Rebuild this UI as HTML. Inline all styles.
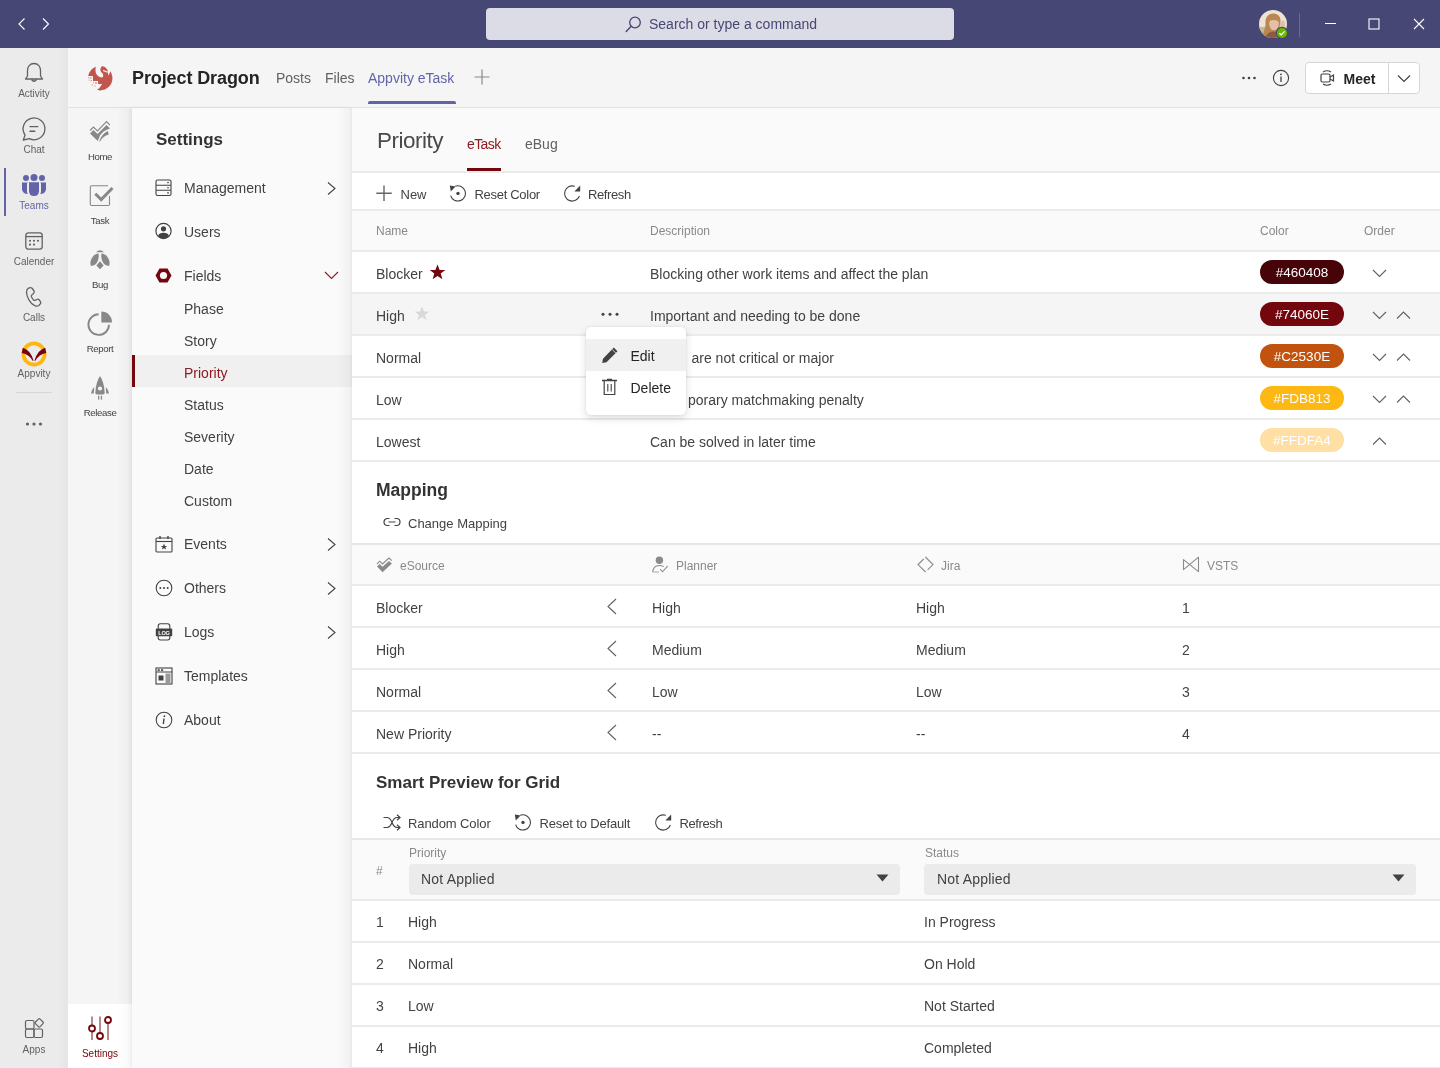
<!DOCTYPE html>
<html><head><meta charset="utf-8">
<style>
*{box-sizing:border-box;margin:0;padding:0}
html,body{width:1440px;height:1068px;overflow:hidden;background:#fff;font-family:"Liberation Sans",sans-serif;color:#242424}
.a{position:absolute}
svg{position:absolute;overflow:visible}
.t{position:absolute;white-space:nowrap;line-height:1}
#root{position:absolute;left:0;top:0;width:1440px;height:1068px;will-change:transform}
</style></head><body><div id="root">

<div class="a" style="left:0px;top:0px;width:1440px;height:48px;background:#464775;"></div>
<svg style="left:18px;top:18px;" width="8" height="12" viewBox="0 0 8 12"><path d="M6.5 0.5 L1 6 L6.5 11.5" fill="none" stroke="#fff" stroke-width="1.1"/></svg>
<svg style="left:42px;top:18px;" width="8" height="12" viewBox="0 0 8 12"><path d="M1 0.5 L6.5 6 L1 11.5" fill="none" stroke="#fff" stroke-width="1.1"/></svg>
<div class="a" style="left:486px;top:8px;width:468px;height:32px;background:#DCDCE6;border-radius:4px;"></div>
<svg style="left:625px;top:16px;" width="17" height="17" viewBox="0 0 17 17"><circle cx="10" cy="6.5" r="5.3" fill="none" stroke="#464775" stroke-width="1.3"/><path d="M6.2 10.3 L1.2 15.5" stroke="#464775" stroke-width="1.4" stroke-linecap="round"/></svg>
<div class="t" style="left:649px;top:17.15px;font-size:14px;color:#464775;">Search or type a command</div>
<svg style="left:1259px;top:10px;" width="28" height="28" viewBox="0 0 28 28"><defs><clipPath id="av"><circle cx="14" cy="14" r="14"/></clipPath></defs>
<g clip-path="url(#av)"><rect width="28" height="28" fill="#ECE3D4"/><rect y="17" width="28" height="11" fill="#C7B69A"/>
<path d="M6.5 10 Q8.5 3 15 3.5 Q21.5 4 21.5 11 L20.5 18 Q18 24 12 28 L2 28 Q5.5 22 6.5 15 Z" fill="#B98752"/>
<ellipse cx="15" cy="14" rx="4.8" ry="6.3" fill="#E3C1A5"/>
<path d="M9.5 11 Q12 5.5 19.5 7.5 Q21.2 9.5 20.6 12.5 Q17 8.5 9.5 11 Z" fill="#B98752"/>
<ellipse cx="23.5" cy="14" rx="2.6" ry="3.6" fill="#DDBFAA"/>
<path d="M6 28 Q9 21 15 21.5 Q20 22 21 28 Z" fill="#8E5B41"/></g></svg>
<svg style="left:1275px;top:26px;" width="14" height="14" viewBox="0 0 14 14"><circle cx="7" cy="7" r="6.2" fill="#464775"/><circle cx="7" cy="7" r="5.1" fill="#6BB700"/><path d="M4.4 7.3 L6.2 8.9 L9.6 5.4" fill="none" stroke="#fff" stroke-width="1.3"/></svg>
<div class="a" style="left:1299px;top:13px;width:1px;height:24px;background:#6A6B95;"></div>
<div class="a" style="left:1325px;top:23px;width:11px;height:1px;background:#fff;"></div>
<svg style="left:1368px;top:18px;" width="12" height="12" viewBox="0 0 12 12"><rect x="1" y="1" width="10" height="10" fill="none" stroke="#fff" stroke-width="1.1"/></svg>
<svg style="left:1413px;top:18px;" width="12" height="12" viewBox="0 0 12 12"><path d="M1 1 L11 11 M11 1 L1 11" stroke="#fff" stroke-width="1.1"/></svg>
<div class="a" style="left:0px;top:48px;width:68px;height:1020px;background:#EBEBEB;"></div>
<div class="a" style="left:57px;top:48px;width:11px;height:1020px;background:linear-gradient(to right, rgba(0,0,0,0), rgba(0,0,0,0.025));"></div>
<svg style="left:24px;top:62px;" width="20" height="22" viewBox="0 0 20 22"><path d="M10 1.5 C5.8 1.5 3.5 4.8 3.5 8.8 L3.5 14 L1.5 17 L18.5 17 L16.5 14 L16.5 8.8 C16.5 4.8 14.2 1.5 10 1.5 Z" fill="none" stroke="#616161" stroke-width="1.3" stroke-linejoin="round"/><path d="M7.5 17.5 Q10 21 12.5 17.5" fill="none" stroke="#616161" stroke-width="1.3"/></svg>
<div class="t" style="left:-26px;width:120px;text-align:center;top:88.53px;font-size:10px;color:#616161;letter-spacing:0px">Activity</div>
<svg style="left:18px;top:112px;" width="32" height="32" viewBox="0 0 32 32"><path d="M7.07 23.05 A10.9 10.9 0 1 1 11.4 26.7 L5.3 28 Z" fill="none" stroke="#616161" stroke-width="1.3" stroke-linejoin="round"/><path d="M12 14.6 H19.8 M12 19.3 H16.8" stroke="#616161" stroke-width="1.4" stroke-linecap="round"/></svg>
<div class="t" style="left:-26px;width:120px;text-align:center;top:144.53px;font-size:10px;color:#616161;letter-spacing:0px">Chat</div>
<div class="a" style="left:4px;top:168px;width:2px;height:48px;background:#6264A7;"></div>
<svg style="left:18px;top:170px;" width="32" height="32" viewBox="0 0 32 32"><g fill="#6264A7"><circle cx="8" cy="8" r="3"/><circle cx="16" cy="7.5" r="3.5"/><circle cx="24" cy="8" r="3"/><path d="M11 12.2 H21 V20.5 Q21 26 16 26 Q11 26 11 20.5 Z"/><path d="M4 12.5 H9.8 Q9 13.2 9 14 V21.5 Q9 23 10 24 Q5 24 4 19.5 Z"/><path d="M28 12.5 H22.2 Q23 13.2 23 14 V21.5 Q23 23 22 24 Q27 24 28 19.5 Z"/></g></svg>
<div class="t" style="left:-26px;width:120px;text-align:center;top:200.53px;font-size:10px;color:#6264A7;letter-spacing:0px">Teams</div>
<svg style="left:25px;top:232px;" width="18" height="18" viewBox="0 0 18 18"><rect x="0.8" y="0.8" width="16.4" height="16.4" rx="2.6" fill="none" stroke="#616161" stroke-width="1.3"/><path d="M0.8 4.6 H17.2" stroke="#616161" stroke-width="1.3"/><g fill="#616161"><circle cx="5" cy="8.8" r="1.05"/><circle cx="9" cy="8.8" r="1.05"/><circle cx="13" cy="8.8" r="1.05"/><circle cx="5" cy="12.6" r="1.05"/><circle cx="9" cy="12.6" r="1.05"/></g></svg>
<div class="t" style="left:-26px;width:120px;text-align:center;top:256.54px;font-size:10px;color:#616161;letter-spacing:0px">Calender</div>
<svg style="left:18px;top:280px;" width="32" height="32" viewBox="0 0 32 32"><path d="M10.5 8.2 Q12.5 7.2 13.8 8 Q15.5 9.8 16.2 11.5 Q16.5 13 15 14 L13.8 15 Q13 15.8 13.5 17 L15.5 20 Q16.2 20.8 17.5 20.2 L18.8 19.5 Q20.2 18.8 21.2 19.8 L22.6 21.8 Q23.2 23.2 22 24.3 L20.8 25.5 Q19.5 26.5 17.5 26 Q13.5 24.5 11 20 Q8.5 15.5 8.5 12 Q8.6 9.2 10.5 8.2 Z" fill="none" stroke="#616161" stroke-width="1.3" stroke-linejoin="round"/></svg>
<div class="t" style="left:-26px;width:120px;text-align:center;top:312.54px;font-size:10px;color:#616161;letter-spacing:0px">Calls</div>
<svg style="left:18px;top:338px;" width="32" height="32" viewBox="0 0 32 32"><circle cx="16" cy="16" r="10.6" fill="none" stroke="#FFB60F" stroke-width="3.8"/><path d="M4.8 9.8 Q12.5 12 15.6 22.8 L14.6 22.8 Q11.5 16.5 3.8 15 Z M27.2 9.8 Q19.5 12 16.4 22.8 L17.4 22.8 Q20.5 16.5 28.2 15 Z" fill="#7A0010"/></svg>
<div class="t" style="left:-26px;width:120px;text-align:center;top:368.54px;font-size:10px;color:#616161;letter-spacing:0px">Appvity</div>
<div class="a" style="left:16px;top:392px;width:36px;height:1px;background:#D6D6D6;"></div>
<svg style="left:25px;top:421px;" width="18" height="6" viewBox="0 0 18 6"><circle cx="2.5" cy="3" r="1.6" fill="#616161"/><circle cx="9" cy="3" r="1.6" fill="#616161"/><circle cx="15.5" cy="3" r="1.6" fill="#616161"/></svg>
<svg style="left:24px;top:1017px;" width="22" height="22" viewBox="0 0 22 22"><rect x="1.5" y="3.5" width="8.5" height="8.5" rx="1.5" fill="none" stroke="#616161" stroke-width="1.2"/><rect x="1.5" y="12" width="8.5" height="8.5" rx="1.5" fill="none" stroke="#616161" stroke-width="1.2"/><rect x="10" y="12" width="8.5" height="8.5" rx="1.5" fill="none" stroke="#616161" stroke-width="1.2"/><rect x="12" y="2.6" width="6.5" height="6.5" rx="1.2" transform="rotate(45 15.25 5.85)" fill="#EBEBEB" stroke="#616161" stroke-width="1.2"/></svg>
<div class="t" style="left:-26px;width:120px;text-align:center;top:1044.54px;font-size:10px;color:#616161;letter-spacing:0px">Apps</div>
<div class="a" style="left:68px;top:48px;width:1372px;height:60px;background:#F5F5F5;"></div>
<div class="a" style="left:68px;top:107px;width:1372px;height:1px;background:#E1E1E1;"></div>
<svg style="left:84px;top:62px;" width="32" height="32" viewBox="0 0 32 32"><circle cx="16.2" cy="16.2" r="12.2" fill="#C4554D"/><path d="M12.8 2.5 C10.3 8 11.2 13.6 16.5 15.3 C19.6 16.1 20.2 12.6 17.6 10.4 C15.8 8.8 15.9 5.8 18.8 3.6 L18 1.5 Z" fill="#F5F5F5"/><path d="M21 2 L30 2 L30 9.2 L26.3 9.2 L24.6 13.8 L23.6 9.6 L23.5 8 L20.5 4 Z" fill="#F5F5F5"/><path d="M19.2 7.8 L23.8 9.8 L23.6 10.8 L19.2 9.2 Z" fill="#F5F5F5"/><path d="M2 14 L9 14 L9 19 L14 19 L14 22 L18.2 22 Q16 26.5 11 29.5 L2 29.5 Z" fill="#F5F5F5"/><g fill="#DDA09A"><rect x="4.2" y="15" width="1.2" height="1.2"/><rect x="6.2" y="15.3" width="1.5" height="1.5"/><rect x="4.5" y="17.5" width="1.1" height="1.1"/><rect x="6.5" y="18" width="1.5" height="1.2"/><rect x="9" y="20" width="1.2" height="1.2"/><rect x="11" y="20.3" width="2" height="1.5"/><rect x="7.5" y="22.5" width="1.5" height="1"/><rect x="10.5" y="23.5" width="1.3" height="1"/></g></svg>
<div class="t" style="left:132px;top:68.76px;font-size:18px;color:#242424;font-weight:700;letter-spacing:-0.1px;">Project Dragon</div>
<div class="t" style="left:276px;top:71.15px;font-size:14px;color:#616161;">Posts</div>
<div class="t" style="left:325px;top:71.15px;font-size:14px;color:#616161;">Files</div>
<div class="t" style="left:368px;top:71.15px;font-size:14px;color:#6264A7;letter-spacing:0px;">Appvity eTask</div>
<div class="a" style="left:368px;top:101px;width:88px;height:3px;background:#6264A7;border-radius:2px 2px 0 0;"></div>
<svg style="left:474px;top:69px;" width="16" height="16" viewBox="0 0 16 16"><path d="M8 0.5 V15.5 M0.5 8 H15.5" stroke="#8A8A8A" stroke-width="1.2"/></svg>
<svg style="left:1242px;top:76px;" width="14" height="4" viewBox="0 0 14 4"><circle cx="1.5" cy="2" r="1.3" fill="#424242"/><circle cx="7" cy="2" r="1.3" fill="#424242"/><circle cx="12.5" cy="2" r="1.3" fill="#424242"/></svg>
<svg style="left:1272px;top:69px;" width="18" height="18" viewBox="0 0 18 18"><circle cx="9" cy="9" r="7.6" fill="none" stroke="#424242" stroke-width="1.1"/><circle cx="9" cy="5.3" r="0.9" fill="#424242"/><path d="M9 7.5 V13" stroke="#424242" stroke-width="1.3"/></svg>
<div class="a" style="left:1305px;top:62px;width:115px;height:32px;background:#fff;border:1px solid #D6D6D6;border-radius:4px;"></div>
<div class="a" style="left:1388px;top:63px;width:1px;height:30px;background:#D6D6D6;"></div>
<svg style="left:1320px;top:70px;" width="15" height="16" viewBox="0 0 15 16"><rect x="1" y="4" width="9" height="8" rx="1.5" fill="none" stroke="#424242" stroke-width="1.2"/><path d="M10 7 L13.5 5 V11 L10 9" fill="none" stroke="#424242" stroke-width="1.2"/><path d="M3 2 Q7 -0.5 11 2 M3 14 Q7 16.5 11 14" fill="none" stroke="#424242" stroke-width="1.1"/></svg>
<div class="t" style="left:1343.5px;top:71.65px;font-size:14px;color:#242424;font-weight:700;">Meet</div>
<svg style="left:1397px;top:74px;" width="14" height="9" viewBox="0 0 14 9"><path d="M1 1.5 L7 7.5 L13 1.5" fill="none" stroke="#424242" stroke-width="1.2"/></svg>
<div class="a" style="left:68px;top:108px;width:64px;height:960px;background:#F5F5F5;"></div>
<svg style="left:84px;top:116px;" width="32" height="32" viewBox="0 0 32 32"><path d="M6 14.5 L9.5 11 L13.5 15 L22.5 5.5 L25.8 9" fill="none" stroke="#888888" stroke-width="1.1"/><path d="M6 17.5 L9.5 14 L13.5 18 L22.5 9 L26 12.5 Q19 14.5 16 19.5 L13.8 25 Z" fill="#888888"/><path d="M15.2 25.5 Q17.5 18 23.8 15 L24.8 18.5 Q19 20 16 25.5 Z" fill="#888888"/></svg>
<div class="t" style="left:40px;width:120px;text-align:center;top:151.87px;font-size:9.6px;color:#424242;letter-spacing:-0.35px">Home</div>
<svg style="left:84px;top:180px;" width="32" height="32" viewBox="0 0 32 32"><path d="M24 5.8 H7.5 Q6.3 5.8 6.3 7 V24.3 Q6.3 25.5 7.5 25.5 H24.3 Q25.5 25.5 25.5 24.3 V16" fill="none" stroke="#888888" stroke-width="1.1"/><path d="M11.3 13.8 L17.2 19.6 L28.5 8" fill="none" stroke="#888888" stroke-width="3"/></svg>
<div class="t" style="left:40px;width:120px;text-align:center;top:215.87px;font-size:9.6px;color:#424242;letter-spacing:-0.35px">Task</div>
<svg style="left:84px;top:244px;" width="32" height="32" viewBox="0 0 32 32"><g fill="#888888"><path d="M12 8.2 Q16 4.2 20 8.2 Z"/><path d="M14.6 9.6 Q9 10 6.6 17 Q6 20.5 7 22 Q12 21.5 14 16.5 Q15.2 12.5 14.6 9.6 Z"/><path d="M17.4 9.6 Q23 10 25.4 17 Q26 20.5 25 22 Q20 21.5 18 16.5 Q16.8 12.5 17.4 9.6 Z"/><path d="M16 17.2 L19.6 21.5 L16 25.2 L12.4 21.5 Z"/></g></svg>
<div class="t" style="left:40px;width:120px;text-align:center;top:279.87px;font-size:9.6px;color:#424242;letter-spacing:-0.35px">Bug</div>
<svg style="left:84px;top:308px;" width="32" height="32" viewBox="0 0 32 32"><path d="M14.6 6.3 A10.3 10.3 0 1 0 25 16.8" fill="none" stroke="#888888" stroke-width="1.9"/><path d="M17.3 3.5 V14.6 H28 A10.8 10.8 0 0 0 17.3 3.5 Z" fill="#888888"/></svg>
<div class="t" style="left:40px;width:120px;text-align:center;top:343.87px;font-size:9.6px;color:#424242;letter-spacing:-0.35px">Report</div>
<svg style="left:84px;top:372px;" width="32" height="32" viewBox="0 0 32 32"><g fill="#888888"><path d="M16 4 Q20.3 10 20.7 21.5 L19.2 22.6 H12.8 L11.3 21.5 Q11.7 10 16 4 Z"/><path d="M10.2 15 Q7.4 18 7 21.6 H9.8 Z M21.8 15 Q24.6 18 25 21.6 H22.2 Z"/><rect x="14" y="23.8" width="1.3" height="3.8"/><rect x="16.8" y="23.8" width="1.3" height="3.8"/></g><ellipse cx="16" cy="16.4" rx="2.1" ry="2" fill="#F5F5F5"/></svg>
<div class="t" style="left:40px;width:120px;text-align:center;top:407.87px;font-size:9.6px;color:#424242;letter-spacing:-0.35px">Release</div>
<div class="a" style="left:116px;top:108px;width:16px;height:896px;background:linear-gradient(to right, rgba(0,0,0,0), rgba(0,0,0,0.03));"></div>
<div class="a" style="left:68px;top:1004px;width:64px;height:64px;background:#FFFFFF;"></div>
<div class="a" style="left:116px;top:1004px;width:16px;height:64px;background:linear-gradient(to right, rgba(0,0,0,0), rgba(0,0,0,0.02));"></div>
<svg style="left:88px;top:1016px;" width="24" height="26" viewBox="0 0 24 26"><path d="M4 0.5 V24 M12 0.5 V24 M20 5 V24" stroke="#74060E" stroke-width="1.2" opacity="0.8"/><circle cx="4" cy="12.5" r="3" fill="#fff" stroke="#74060E" stroke-width="1.8"/><circle cx="12" cy="20" r="3" fill="#fff" stroke="#74060E" stroke-width="1.8"/><circle cx="20" cy="4" r="3" fill="#fff" stroke="#74060E" stroke-width="1.8"/></svg>
<div class="t" style="left:40px;width:120px;text-align:center;top:1048.54px;font-size:10px;color:#74060E;letter-spacing:0px">Settings</div>
<div class="a" style="left:352px;top:108px;width:1088px;height:960px;background:#FFFFFF;"></div>
<div class="a" style="left:352px;top:108px;width:1088px;height:63px;background:#FAFAFA;"></div>
<div class="a" style="left:352px;top:171px;width:1088px;height:2px;background:#EBEBEB;"></div>
<div class="t" style="left:377px;top:129.75px;font-size:22.5px;color:#4A4A4A;letter-spacing:-0.5px;">Priority</div>
<div class="t" style="left:467px;top:137.15px;font-size:14px;color:#8E1B22;letter-spacing:-0.6px;">eTask</div>
<div class="a" style="left:467px;top:168px;width:34px;height:3px;background:#74060E;"></div>
<div class="t" style="left:525px;top:137.15px;font-size:14px;color:#616161;">eBug</div>
<svg style="left:376px;top:185px;" width="17" height="17" viewBox="0 0 17 17"><path d="M8 0.5 V16 M0.3 8.2 H15.8" stroke="#666666" stroke-width="1.4"/></svg>
<div class="t" style="left:400.5px;top:187.50px;font-size:13px;color:#424242;">New</div>
<svg style="left:449px;top:184px;" width="18" height="18" viewBox="0 0 18 18"><path d="M6.2 2.3 A7.6 7.6 0 1 1 1.6 11.6" fill="none" stroke="#424242" stroke-width="1.1"/><path d="M0.8 1.6 L6.6 2.6 L1.8 7.6 Z" fill="#424242"/><circle cx="9" cy="9.4" r="1.7" fill="#424242"/></svg>
<div class="t" style="left:474.5px;top:187.50px;font-size:13px;color:#424242;letter-spacing:-0.3px;">Reset Color</div>
<svg style="left:563px;top:184px;" width="18" height="18" viewBox="0 0 18 18"><path d="M11.8 2.3 A7.6 7.6 0 1 0 16.4 12" fill="none" stroke="#424242" stroke-width="1.1"/><path d="M17.2 1.6 V7.6 L11.4 7.6 Z" fill="#424242"/></svg>
<div class="t" style="left:588px;top:187.50px;font-size:13px;color:#424242;letter-spacing:-0.4px;">Refresh</div>
<div class="a" style="left:352px;top:209px;width:1088px;height:2px;background:#EBEBEB;"></div>
<div class="a" style="left:352px;top:211px;width:1088px;height:39px;background:#FAFAFA;"></div>
<div class="a" style="left:352px;top:250px;width:1088px;height:2px;background:#EBEBEB;"></div>
<div class="t" style="left:376px;top:225.34px;font-size:12px;color:#8A8A8A;">Name</div>
<div class="t" style="left:650px;top:225.34px;font-size:12px;color:#8A8A8A;">Description</div>
<div class="t" style="left:1260px;top:225.34px;font-size:12px;color:#8A8A8A;">Color</div>
<div class="t" style="left:1364px;top:225.34px;font-size:12px;color:#8A8A8A;">Order</div>
<div class="a" style="left:352px;top:252px;width:1088px;height:40px;background:#FFFFFF;"></div>
<div class="a" style="left:352px;top:292px;width:1088px;height:2px;background:#EBEBEB;"></div>
<div class="t" style="left:376px;top:267.15px;font-size:14px;color:#424242;">Blocker</div>
<div class="t" style="left:650px;top:267.15px;font-size:14px;color:#424242;">Blocking other work items and affect the plan</div>
<div class="a" style="left:1260px;top:260px;width:84px;height:24px;background:#460408;border-radius:12px;"></div>
<div class="t" style="left:1260px;width:84px;text-align:center;top:265.57px;font-size:13.5px;color:#FFFFFF">#460408</div>
<svg style="left:1372px;top:269px;" width="16" height="9" viewBox="0 0 16 9"><path d="M1 1 L7.5 7.5 L14 1" fill="none" stroke="#616161" stroke-width="1.1"/></svg>
<div class="a" style="left:352px;top:294px;width:1088px;height:40px;background:#F5F5F5;"></div>
<div class="a" style="left:352px;top:334px;width:1088px;height:2px;background:#EBEBEB;"></div>
<div class="t" style="left:376px;top:309.15px;font-size:14px;color:#424242;">High</div>
<div class="t" style="left:650px;top:309.15px;font-size:14px;color:#424242;">Important and needing to be done</div>
<div class="a" style="left:1260px;top:302px;width:84px;height:24px;background:#74060E;border-radius:12px;"></div>
<div class="t" style="left:1260px;width:84px;text-align:center;top:307.57px;font-size:13.5px;color:#FFFFFF">#74060E</div>
<svg style="left:1372px;top:311px;" width="16" height="9" viewBox="0 0 16 9"><path d="M1 1 L7.5 7.5 L14 1" fill="none" stroke="#616161" stroke-width="1.1"/></svg>
<svg style="left:1396px;top:311px;" width="16" height="9" viewBox="0 0 16 9"><path d="M1 7.5 L7.5 1 L14 7.5" fill="none" stroke="#616161" stroke-width="1.1"/></svg>
<div class="a" style="left:352px;top:336px;width:1088px;height:40px;background:#FFFFFF;"></div>
<div class="a" style="left:352px;top:376px;width:1088px;height:2px;background:#EBEBEB;"></div>
<div class="t" style="left:376px;top:351.15px;font-size:14px;color:#424242;">Normal</div>
<div class="t" style="left:691.5px;top:351.15px;font-size:14px;color:#424242;">are not critical or major</div>
<div class="a" style="left:1260px;top:344px;width:84px;height:24px;background:#C2530E;border-radius:12px;"></div>
<div class="t" style="left:1260px;width:84px;text-align:center;top:349.57px;font-size:13.5px;color:#FFFFFF">#C2530E</div>
<svg style="left:1372px;top:353px;" width="16" height="9" viewBox="0 0 16 9"><path d="M1 1 L7.5 7.5 L14 1" fill="none" stroke="#616161" stroke-width="1.1"/></svg>
<svg style="left:1396px;top:353px;" width="16" height="9" viewBox="0 0 16 9"><path d="M1 7.5 L7.5 1 L14 7.5" fill="none" stroke="#616161" stroke-width="1.1"/></svg>
<div class="a" style="left:352px;top:378px;width:1088px;height:40px;background:#FFFFFF;"></div>
<div class="a" style="left:352px;top:418px;width:1088px;height:2px;background:#EBEBEB;"></div>
<div class="t" style="left:376px;top:393.15px;font-size:14px;color:#424242;">Low</div>
<div class="t" style="left:688px;top:393.15px;font-size:14px;color:#424242;">porary matchmaking penalty</div>
<div class="a" style="left:1260px;top:386px;width:84px;height:24px;background:#FDB813;border-radius:12px;"></div>
<div class="t" style="left:1260px;width:84px;text-align:center;top:391.57px;font-size:13.5px;color:#FFFFFF">#FDB813</div>
<svg style="left:1372px;top:395px;" width="16" height="9" viewBox="0 0 16 9"><path d="M1 1 L7.5 7.5 L14 1" fill="none" stroke="#616161" stroke-width="1.1"/></svg>
<svg style="left:1396px;top:395px;" width="16" height="9" viewBox="0 0 16 9"><path d="M1 7.5 L7.5 1 L14 7.5" fill="none" stroke="#616161" stroke-width="1.1"/></svg>
<div class="a" style="left:352px;top:420px;width:1088px;height:40px;background:#FFFFFF;"></div>
<div class="a" style="left:352px;top:460px;width:1088px;height:2px;background:#EBEBEB;"></div>
<div class="t" style="left:376px;top:435.15px;font-size:14px;color:#424242;">Lowest</div>
<div class="t" style="left:650px;top:435.15px;font-size:14px;color:#424242;">Can be solved in later time</div>
<div class="a" style="left:1260px;top:428px;width:84px;height:24px;background:#FFDFA4;border-radius:12px;"></div>
<div class="t" style="left:1260px;width:84px;text-align:center;top:433.57px;font-size:13.5px;color:#FFFFFF">#FFDFA4</div>
<svg style="left:1372px;top:437px;" width="16" height="9" viewBox="0 0 16 9"><path d="M1 7.5 L7.5 1 L14 7.5" fill="none" stroke="#616161" stroke-width="1.1"/></svg>
<svg style="left:429px;top:264px;" width="17" height="16" viewBox="0 0 17 16"><path d="M8.5 0.5 L10.6 6 L16.3 6 L11.7 9.6 L13.4 15.3 L8.5 11.9 L3.6 15.3 L5.3 9.6 L0.7 6 L6.4 6 Z" fill="#74060E"/></svg>
<svg style="left:414px;top:306px;" width="16" height="15" viewBox="0 0 16 15"><path d="M8 0.5 L10 5.6 L15.3 5.6 L11 9 L12.6 14.3 L8 11.1 L3.4 14.3 L5 9 L0.7 5.6 L6 5.6 Z" fill="#D9D9D9"/></svg>
<svg style="left:601px;top:312px;" width="18" height="5" viewBox="0 0 18 5"><circle cx="2" cy="2.2" r="1.5" fill="#424242"/><circle cx="9" cy="2.2" r="1.5" fill="#424242"/><circle cx="16" cy="2.2" r="1.5" fill="#424242"/></svg>
<div class="t" style="left:376px;top:482.19px;font-size:17.5px;color:#333333;font-weight:700;">Mapping</div>
<svg style="left:383px;top:515px;" width="18" height="14" viewBox="0 0 18 14"><path d="M6.5 3.5 H4.5 A3.5 3.5 0 0 0 4.5 10.5 H6.5 M11.5 3.5 H13.5 A3.5 3.5 0 0 1 13.5 10.5 H11.5 M5.5 7 H12.5" fill="none" stroke="#424242" stroke-width="1.2"/></svg>
<div class="t" style="left:408px;top:517.00px;font-size:13px;color:#424242;">Change Mapping</div>
<div class="a" style="left:352px;top:543px;width:1088px;height:2px;background:#E6E6E6;"></div>
<div class="a" style="left:352px;top:545px;width:1088px;height:39px;background:#FAFAFA;"></div>
<div class="a" style="left:352px;top:584px;width:1088px;height:2px;background:#EBEBEB;"></div>
<div class="t" style="left:400px;top:559.84px;font-size:12px;color:#8A8A8A;">eSource</div>
<svg style="left:370px;top:550px;" width="32" height="32" viewBox="0 0 32 32"><path d="M7 14 L9.7 11.2 L12.5 14 L19 8 L21.8 10.6" fill="none" stroke="#8A8A8A" stroke-width="1.1"/><path d="M7 16.6 L9.7 13.9 L12.5 16.7 L19 10.9 L21.9 13.5 L12.6 22.2 Z" fill="#8A8A8A"/></svg>
<div class="t" style="left:676px;top:559.84px;font-size:12px;color:#8A8A8A;">Planner</div>
<svg style="left:644px;top:550px;" width="32" height="32" viewBox="0 0 32 32"><circle cx="15.4" cy="10.2" r="3.7" fill="#8A8A8A"/><path d="M8.6 22 Q9.5 15.5 15 15.5 Q18 15.5 19.8 16.6" fill="none" stroke="#8A8A8A" stroke-width="1.1"/><path d="M8.6 22 H15" stroke="#B5B5B5" stroke-width="1.2"/><path d="M16.2 19.2 L18.5 21.8 L23.6 16.2" fill="none" stroke="#8A8A8A" stroke-width="1.1"/></svg>
<div class="t" style="left:941px;top:559.84px;font-size:12px;color:#8A8A8A;">Jira</div>
<svg style="left:908px;top:550px;" width="32" height="32" viewBox="0 0 32 32"><path d="M15.7 9 L10 14.6 L17.6 22 M17.4 7 L25 14.6 L19.6 19.9" fill="none" stroke="#8A8A8A" stroke-width="1.1"/></svg>
<div class="t" style="left:1207px;top:559.84px;font-size:12px;color:#8A8A8A;">VSTS</div>
<svg style="left:1174px;top:550px;" width="32" height="32" viewBox="0 0 32 32"><path d="M9.5 9.6 L24.5 21.6 V7.2 L9.5 19.6 Z" fill="none" stroke="#8A8A8A" stroke-width="1.1" stroke-linejoin="round"/></svg>
<div class="a" style="left:352px;top:626px;width:1088px;height:2px;background:#EBEBEB;"></div>
<div class="t" style="left:376px;top:601.15px;font-size:14px;color:#424242;">Blocker</div>
<svg style="left:606px;top:598px;" width="12" height="18" viewBox="0 0 12 18"><path d="M10 1 L2 8.5 L10 16" fill="none" stroke="#616161" stroke-width="1.1"/></svg>
<div class="t" style="left:652px;top:601.15px;font-size:14px;color:#424242;">High</div>
<div class="t" style="left:916px;top:601.15px;font-size:14px;color:#424242;">High</div>
<div class="t" style="left:1182px;top:601.15px;font-size:14px;color:#424242;">1</div>
<div class="a" style="left:352px;top:668px;width:1088px;height:2px;background:#EBEBEB;"></div>
<div class="t" style="left:376px;top:643.15px;font-size:14px;color:#424242;">High</div>
<svg style="left:606px;top:640px;" width="12" height="18" viewBox="0 0 12 18"><path d="M10 1 L2 8.5 L10 16" fill="none" stroke="#616161" stroke-width="1.1"/></svg>
<div class="t" style="left:652px;top:643.15px;font-size:14px;color:#424242;">Medium</div>
<div class="t" style="left:916px;top:643.15px;font-size:14px;color:#424242;">Medium</div>
<div class="t" style="left:1182px;top:643.15px;font-size:14px;color:#424242;">2</div>
<div class="a" style="left:352px;top:710px;width:1088px;height:2px;background:#EBEBEB;"></div>
<div class="t" style="left:376px;top:685.15px;font-size:14px;color:#424242;">Normal</div>
<svg style="left:606px;top:682px;" width="12" height="18" viewBox="0 0 12 18"><path d="M10 1 L2 8.5 L10 16" fill="none" stroke="#616161" stroke-width="1.1"/></svg>
<div class="t" style="left:652px;top:685.15px;font-size:14px;color:#424242;">Low</div>
<div class="t" style="left:916px;top:685.15px;font-size:14px;color:#424242;">Low</div>
<div class="t" style="left:1182px;top:685.15px;font-size:14px;color:#424242;">3</div>
<div class="a" style="left:352px;top:752px;width:1088px;height:2px;background:#EBEBEB;"></div>
<div class="t" style="left:376px;top:727.15px;font-size:14px;color:#424242;">New Priority</div>
<svg style="left:606px;top:724px;" width="12" height="18" viewBox="0 0 12 18"><path d="M10 1 L2 8.5 L10 16" fill="none" stroke="#616161" stroke-width="1.1"/></svg>
<div class="t" style="left:652px;top:727.15px;font-size:14px;color:#424242;">--</div>
<div class="t" style="left:916px;top:727.15px;font-size:14px;color:#424242;">--</div>
<div class="t" style="left:1182px;top:727.15px;font-size:14px;color:#424242;">4</div>
<div class="t" style="left:376px;top:774.11px;font-size:17px;color:#333333;font-weight:700;">Smart Preview for Grid</div>
<svg style="left:383px;top:814px;" width="18" height="17" viewBox="0 0 18 17"><path d="M0.5 3.5 H4 Q7 3.5 9 8.5 Q11 13.5 14 13.5 H17 M0.5 13.5 H4 Q7 13.5 9 8.5 Q11 3.5 14 3.5 H17" fill="none" stroke="#424242" stroke-width="1.2"/><path d="M14 0.8 L17 3.5 L14 6.2 M14 10.8 L17 13.5 L14 16.2" fill="none" stroke="#424242" stroke-width="1.2"/></svg>
<div class="t" style="left:408px;top:817.00px;font-size:13px;color:#424242;letter-spacing:-0.1px;">Random Color</div>
<svg style="left:514px;top:813px;" width="18" height="18" viewBox="0 0 18 18"><path d="M6.2 2.3 A7.6 7.6 0 1 1 1.6 11.6" fill="none" stroke="#424242" stroke-width="1.1"/><path d="M0.8 1.6 L6.6 2.6 L1.8 7.6 Z" fill="#424242"/><circle cx="9" cy="9.4" r="1.7" fill="#424242"/></svg>
<div class="t" style="left:539.5px;top:817.00px;font-size:13px;color:#424242;letter-spacing:-0.15px;">Reset to Default</div>
<svg style="left:654px;top:813px;" width="18" height="18" viewBox="0 0 18 18"><path d="M11.8 2.3 A7.6 7.6 0 1 0 16.4 12" fill="none" stroke="#424242" stroke-width="1.1"/><path d="M17.2 1.6 V7.6 L11.4 7.6 Z" fill="#424242"/></svg>
<div class="t" style="left:679.5px;top:817.00px;font-size:13px;color:#424242;letter-spacing:-0.4px;">Refresh</div>
<div class="a" style="left:352px;top:838px;width:1088px;height:2px;background:#E8E8E8;"></div>
<div class="a" style="left:352px;top:840px;width:1088px;height:59px;background:#FAFAFA;"></div>
<div class="a" style="left:352px;top:899px;width:1088px;height:2px;background:#EBEBEB;"></div>
<div class="t" style="left:376px;top:864.84px;font-size:12px;color:#8A8A8A;">#</div>
<div class="t" style="left:409px;top:847.34px;font-size:12px;color:#8A8A8A;">Priority</div>
<div class="t" style="left:925px;top:847.34px;font-size:12px;color:#8A8A8A;">Status</div>
<div class="a" style="left:409px;top:864px;width:491px;height:31px;background:#EBEBEB;border-radius:4px;"></div>
<div class="a" style="left:924px;top:864px;width:492px;height:31px;background:#EBEBEB;border-radius:4px;"></div>
<div class="t" style="left:421px;top:872.15px;font-size:14px;color:#424242;letter-spacing:0.2px;">Not Applied</div>
<div class="t" style="left:937px;top:872.15px;font-size:14px;color:#424242;letter-spacing:0.2px;">Not Applied</div>
<svg style="left:876px;top:874px;" width="13" height="8" viewBox="0 0 13 8"><path d="M0.5 0.5 H12.5 L6.5 7.5 Z" fill="#424242"/></svg>
<svg style="left:1392px;top:874px;" width="13" height="8" viewBox="0 0 13 8"><path d="M0.5 0.5 H12.5 L6.5 7.5 Z" fill="#424242"/></svg>
<div class="a" style="left:352px;top:941px;width:1088px;height:2px;background:#EBEBEB;"></div>
<div class="t" style="left:376px;top:915.15px;font-size:14px;color:#424242;">1</div>
<div class="t" style="left:408px;top:915.15px;font-size:14px;color:#424242;">High</div>
<div class="t" style="left:924px;top:915.15px;font-size:14px;color:#424242;">In Progress</div>
<div class="a" style="left:352px;top:983px;width:1088px;height:2px;background:#EBEBEB;"></div>
<div class="t" style="left:376px;top:957.15px;font-size:14px;color:#424242;">2</div>
<div class="t" style="left:408px;top:957.15px;font-size:14px;color:#424242;">Normal</div>
<div class="t" style="left:924px;top:957.15px;font-size:14px;color:#424242;">On Hold</div>
<div class="a" style="left:352px;top:1025px;width:1088px;height:2px;background:#EBEBEB;"></div>
<div class="t" style="left:376px;top:999.15px;font-size:14px;color:#424242;">3</div>
<div class="t" style="left:408px;top:999.15px;font-size:14px;color:#424242;">Low</div>
<div class="t" style="left:924px;top:999.15px;font-size:14px;color:#424242;">Not Started</div>
<div class="a" style="left:352px;top:1067px;width:1088px;height:2px;background:#EBEBEB;"></div>
<div class="t" style="left:376px;top:1041.15px;font-size:14px;color:#424242;">4</div>
<div class="t" style="left:408px;top:1041.15px;font-size:14px;color:#424242;">High</div>
<div class="t" style="left:924px;top:1041.15px;font-size:14px;color:#424242;">Completed</div>
<div class="a" style="left:132px;top:108px;width:220px;height:960px;background:#FAFAFA;box-shadow:-2px 0 4px rgba(0,0,0,0.06)"></div>
<div class="t" style="left:156px;top:131.11px;font-size:17px;color:#333333;font-weight:700;">Settings</div>
<svg style="left:155px;top:179px;" width="18" height="18" viewBox="0 0 18 18"><rect x="1" y="1" width="15" height="15.5" rx="1.5" fill="none" stroke="#424242" stroke-width="1.1"/><path d="M1 6.2 H16 M1 11.3 H16" stroke="#424242" stroke-width="1.1"/><g fill="#424242"><circle cx="13" cy="3.6" r="0.8"/><circle cx="13" cy="8.8" r="0.8"/><circle cx="13" cy="13.9" r="0.8"/></g></svg>
<div class="t" style="left:184px;top:181.15px;font-size:14px;color:#424242;">Management</div>
<svg style="left:327px;top:182px;" width="10" height="13" viewBox="0 0 10 13"><path d="M1 0.5 L8 6.5 L1 12.5" fill="none" stroke="#424242" stroke-width="1.1"/></svg>
<svg style="left:155px;top:222px;" width="18" height="18" viewBox="0 0 18 18"><circle cx="8.5" cy="9" r="7.6" fill="none" stroke="#424242" stroke-width="1.2"/><circle cx="8.5" cy="6.8" r="2.6" fill="#424242"/><path d="M3 14 Q4 10.8 8.5 10.8 Q13 10.8 14 14 Q11.5 16.6 8.5 16.6 Q5.5 16.6 3 14Z" fill="#424242"/></svg>
<div class="t" style="left:184px;top:225.15px;font-size:14px;color:#424242;">Users</div>
<svg style="left:155px;top:267px;" width="18" height="18" viewBox="0 0 18 18"><path d="M4.5 1.5 H12.5 L16.5 8.5 L12.5 15.5 H4.5 L0.5 8.5 Z" fill="#74060E"/><circle cx="8.5" cy="8.5" r="3.6" fill="#FAFAFA"/></svg>
<div class="t" style="left:184px;top:269.15px;font-size:14px;color:#424242;">Fields</div>
<svg style="left:324px;top:271px;" width="15" height="9" viewBox="0 0 15 9"><path d="M1 1 L7.5 7.5 L14 1" fill="none" stroke="#8E1B22" stroke-width="1.1"/></svg>
<div class="t" style="left:184px;top:301.85px;font-size:14px;color:#424242;">Phase</div>
<div class="t" style="left:184px;top:333.85px;font-size:14px;color:#424242;">Story</div>
<div class="a" style="left:132px;top:355px;width:220px;height:32px;background:#F0F0F0;"></div>
<div class="a" style="left:132px;top:355px;width:3px;height:32px;background:#74060E;"></div>
<div class="t" style="left:184px;top:365.85px;font-size:14px;color:#8E1B22;">Priority</div>
<div class="t" style="left:184px;top:397.85px;font-size:14px;color:#424242;">Status</div>
<div class="t" style="left:184px;top:429.85px;font-size:14px;color:#424242;">Severity</div>
<div class="t" style="left:184px;top:461.85px;font-size:14px;color:#424242;">Date</div>
<div class="t" style="left:184px;top:493.85px;font-size:14px;color:#424242;">Custom</div>
<svg style="left:155px;top:535px;" width="18" height="18" viewBox="0 0 18 18"><rect x="1" y="3" width="16" height="14" rx="1" fill="none" stroke="#424242" stroke-width="1.1"/><path d="M1 6.5 H17" stroke="#424242" stroke-width="1.1"/><path d="M5 1 V4 M13 1 V4" stroke="#424242" stroke-width="1.4"/><path d="M9 8.6 L9.9 10.9 L12.2 10.9 L10.4 12.3 L11.1 14.6 L9 13.2 L6.9 14.6 L7.6 12.3 L5.8 10.9 L8.1 10.9 Z" fill="#424242"/></svg>
<div class="t" style="left:184px;top:537.15px;font-size:14px;color:#424242;">Events</div>
<svg style="left:327px;top:538px;" width="10" height="13" viewBox="0 0 10 13"><path d="M1 0.5 L8 6.5 L1 12.5" fill="none" stroke="#424242" stroke-width="1.1"/></svg>
<svg style="left:155px;top:579px;" width="18" height="18" viewBox="0 0 18 18"><circle cx="9" cy="9" r="7.8" fill="none" stroke="#424242" stroke-width="1.1"/><g fill="#424242"><circle cx="5.3" cy="9" r="1"/><circle cx="9" cy="9" r="1"/><circle cx="12.7" cy="9" r="1"/></g></svg>
<div class="t" style="left:184px;top:581.15px;font-size:14px;color:#424242;">Others</div>
<svg style="left:327px;top:582px;" width="10" height="13" viewBox="0 0 10 13"><path d="M1 0.5 L8 6.5 L1 12.5" fill="none" stroke="#424242" stroke-width="1.1"/></svg>
<svg style="left:155px;top:623px;" width="18" height="18" viewBox="0 0 18 18"><rect x="3.2" y="0.8" width="11.6" height="16.2" rx="2.2" fill="none" stroke="#424242" stroke-width="1.1"/><rect x="0.8" y="5.6" width="16.4" height="7.6" rx="0.8" fill="#424242"/><text x="9" y="11.5" font-size="5.6" font-family="Liberation Sans" font-weight="700" fill="#fff" text-anchor="middle" letter-spacing="-0.2">LOG</text></svg>
<div class="t" style="left:184px;top:625.15px;font-size:14px;color:#424242;">Logs</div>
<svg style="left:327px;top:626px;" width="10" height="13" viewBox="0 0 10 13"><path d="M1 0.5 L8 6.5 L1 12.5" fill="none" stroke="#424242" stroke-width="1.1"/></svg>
<svg style="left:155px;top:667px;" width="18" height="18" viewBox="0 0 18 18"><rect x="1" y="1" width="16" height="16" fill="none" stroke="#424242" stroke-width="1.1"/><path d="M1 5 H17" stroke="#424242" stroke-width="1"/><rect x="2.6" y="2.3" width="2.2" height="1.6" fill="#424242"/><rect x="6" y="2.3" width="2.2" height="1.6" fill="#424242"/><rect x="3.5" y="8.5" width="5" height="5" fill="#424242"/><rect x="10.5" y="6.5" width="5" height="9.5" fill="#9A9A9A"/></svg>
<div class="t" style="left:184px;top:669.15px;font-size:14px;color:#424242;">Templates</div>
<svg style="left:155px;top:711px;" width="18" height="18" viewBox="0 0 18 18"><circle cx="9" cy="9" r="7.8" fill="none" stroke="#424242" stroke-width="1.1"/><circle cx="9.4" cy="5.2" r="0.9" fill="#424242"/><path d="M9 7.5 L8.3 13" stroke="#424242" stroke-width="1.4"/></svg>
<div class="t" style="left:184px;top:713.15px;font-size:14px;color:#424242;">About</div>
<div class="a" style="left:338px;top:108px;width:14px;height:960px;background:linear-gradient(to right, rgba(0,0,0,0), rgba(0,0,0,0.035) 80%, rgba(0,0,0,0.07));"></div>
<div class="a" style="left:586px;top:327px;width:100px;height:88px;background:#fff;border-radius:5px;box-shadow:0 3px 8px rgba(0,0,0,0.14),0 0 2px rgba(0,0,0,0.08)"></div>
<div class="a" style="left:586px;top:339px;width:100px;height:32px;background:#F0F0F0;"></div>
<svg style="left:601px;top:346px;" width="18" height="18" viewBox="0 0 18 18"><path d="M12.8 1.5 L16.5 5.2 L5.5 16.2 L1.2 17 L2 12.7 Z" fill="#424242"/><path d="M11 3.3 L14.7 7" stroke="#F0F0F0" stroke-width="0.8"/></svg>
<div class="t" style="left:630.5px;top:349.45px;font-size:14px;color:#242424;">Edit</div>
<svg style="left:601px;top:378px;" width="18" height="18" viewBox="0 0 18 18"><path d="M1 2.5 H16 M6 1.5 H11" stroke="#424242" stroke-width="1.4"/><path d="M3.2 3 V16.5 H13.8 V3" fill="none" stroke="#424242" stroke-width="1.2"/><path d="M6.8 6 V13.5 M10.2 6 V13.5" stroke="#424242" stroke-width="1.1"/></svg>
<div class="t" style="left:630.5px;top:381.15px;font-size:14px;color:#242424;">Delete</div>
</div></body></html>
